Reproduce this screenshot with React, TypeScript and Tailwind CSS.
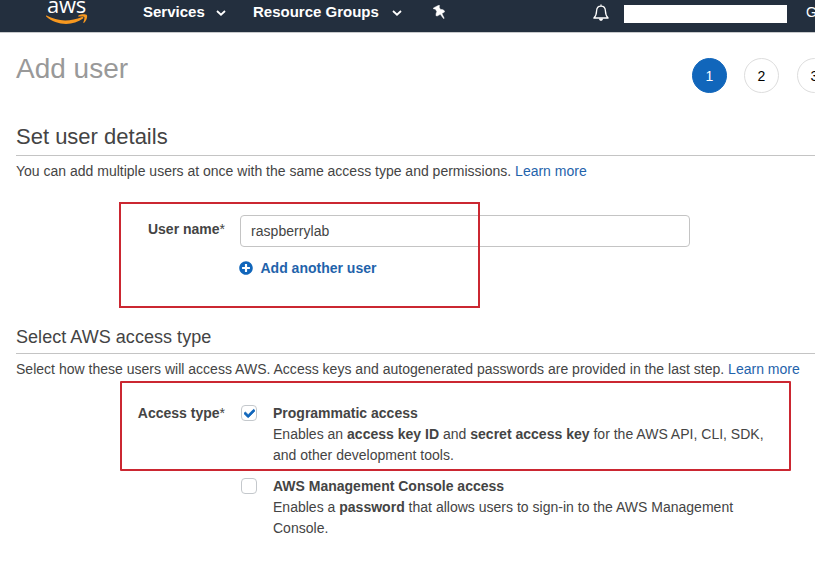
import type { ReactNode } from "react";
import { FaCheck, FaPlusCircle } from "react-icons/fa";

function Chevron({ className }: { className: string }) {
  return (
    <svg viewBox="0 0 10 6" className={`h-[6px] w-[10px] ${className}`} fill="none" stroke="#fff" strokeWidth="1.8">
      <path d="M1 1l4 3.700L9 1" />
    </svg>
  );
}

function Logo() {
  return (
    <div className="relative ml-[46px] h-8 w-[42px]">
      <span className="absolute top-[-12px] left-[1px] font-['Open_Sans',sans-serif] text-[22px] leading-[32px] font-medium tracking-[-0.3px] text-white">
        aws
      </span>
      <svg viewBox="0 0 42 12" className="absolute top-[14px] left-0 h-3 w-[42px]" fill="#f7981f">
        <path d="M.5 1.600C11 7.600 24 7.900 36 3c1.200-.4 2 .7 1 1.500C27 12.300 10 11.700.2 2.500c-.5-.5-.2-1.200.3-.9z" />
        <path d="M32.200 1.700c2.400-1.600 7.400-1.700 8.500-.8 1.200.9-.1 5.700-2.600 7.900-.5.400-1 .1-.7-.5.700-1.700 1.400-4.600.9-5.200-.6-.7-3.600-.6-5.500-.5-.7.100-1-.5-.6-.9z" />
      </svg>
    </div>
  );
}

function Pin() {
  return (
    <svg
      viewBox="0 0 12 14"
      className="mt-[5px] ml-[31px] h-[14px] w-3"
      fill="#fff"
      stroke="#fff"
      strokeWidth=".5"
      strokeLinejoin="round"
    >
      <path d="M.5 2.900L5.700.3c.8-.3 1.300.7.700 1.200l-.4.400 1.500 2.600c2-.1 3.500.5 4.100 1.700.2.400.1.700-.2.900L8.900 8.500l2.300 4.800-.7.200-3.200-4.200-3.200 1.700c-.4.200-.7.100-.9-.3-.4-1.300-.1-2.800.7-4L2.300 3.900l-.9.200C.5 4.200-.1 3.300.5 2.900z" />
    </svg>
  );
}

function Bell() {
  return (
    <svg viewBox="0 0 16 18" className="h-[18px] w-4" fill="none" stroke="#fff" strokeWidth="1.300" strokeLinejoin="round">
      <path d="M8 .4v1.800M8 2.200c-3.100 0-4.300 2.200-4.400 4.600C3.500 10.500 2.800 12.300.9 14h14.200c-1.900-1.700-2.600-3.500-2.700-7.200C12.300 4.400 11.100 2.200 8 2.200z" />
      <path d="M5.900 14.400h4.200c-.2 1.500-1 2.300-2.100 2.300s-1.900-.8-2.100-2.300z" fill="#fff" stroke="none" />
    </svg>
  );
}

function Header() {
  return (
    <header className="flex h-[33px] w-full overflow-hidden border-b border-[#c8cacc] bg-[#232f3e] text-[15px] leading-6 font-bold text-white *:shrink-0">
      <Logo />
      <span className="ml-[55px] w-[61px] whitespace-nowrap">Services</span>
      <Chevron className="mt-[10px] ml-[12px]" />
      <span className="ml-[27px] w-[127px] whitespace-nowrap">Resource Groups</span>
      <Chevron className="mt-[10px] ml-[12px]" />
      <Pin />
      <div className="mt-[4px] ml-[148px]">
        <Bell />
      </div>
      <div className="mt-[5px] ml-[15px] h-[18px] w-[163px] bg-white" />
      <span className="ml-[19px] text-[14px] font-normal">G</span>
    </header>
  );
}

function Step({ n, active = false }: { n: number; active?: boolean }) {
  return (
    <div
      className={`flex h-[35px] w-[35px] shrink-0 items-center justify-center rounded-full border pt-px text-[14px] ${
        active ? "border-[#1166bb] bg-[#1166bb] text-white" : "border-[#ddd] bg-white text-black"
      }`}
    >
      {n}
    </div>
  );
}

function LearnMore() {
  return <a className="text-[#1f63ab]">Learn more</a>;
}

function Option({ checked = false, title, children }: { checked?: boolean; title: string; children: ReactNode }) {
  return (
    <div className="flex">
      <div className="mt-[2px] flex h-4 w-4 shrink-0 items-center justify-center rounded-[4px] border border-[#c4c8cc] bg-white">
        {checked && <FaCheck className="h-[11px] w-[11px] text-[#1166bb]" stroke="currentColor" strokeWidth={36} />}
      </div>
      <div className="ml-4 leading-[21px] tracking-[0.01px] whitespace-nowrap">
        <div className="font-bold tracking-normal">{title}</div>
        {children}
      </div>
    </div>
  );
}

export default function App() {
  return (
    <div className="h-[562px] w-[815px] overflow-hidden bg-white font-['Liberation_Sans',Arial,sans-serif] text-[14px] text-[#444]">
      <Header />
      <main className="pl-4">
        <div className="flex h-[83px]">
          <h1 className="mt-[18px] w-[676px] shrink-0 text-[28px] leading-9 text-[#999]">Add user</h1>
          <div className="mt-[25px] flex">
            <Step n={1} active />
            <div className="mr-[18px] ml-[17px]">
              <Step n={2} />
            </div>
            <Step n={3} />
          </div>
        </div>

        <section className="h-[206px]">
          <h2 className="h-10 border-b border-[#c4c4c4] pt-[7px] text-[22px] leading-[28px]">Set user details</h2>
          <p className="mt-[5px] leading-5">
            You can add multiple users at once with the same access type and permissions. <LearnMore />
          </p>
          <div className="relative mt-[21px] ml-[103px] h-[106px] w-[361px]">
            <div className="flex pt-[13px]">
              <label className="w-[106px] shrink-0 pt-[4px] text-right leading-5 font-bold">
                User name<span className="font-normal">*</span>
              </label>
              <div className="ml-[15px] shrink-0">
                <div className="flex h-8 w-[450px] items-center rounded-[4px] border border-[#c4c4c4] pl-[10px] tracking-[0.04px]">
                  raspberrylab
                </div>
                <a className="mt-[11px] flex items-center leading-5 font-bold text-[#1f63ab]">
                  <FaPlusCircle className="mr-[7.500px] -ml-px h-[14px] w-[14px] text-[#1166bb]" />
                  Add another user
                </a>
              </div>
            </div>
            {/* Highlight frame over the user name field */}
            <div className="absolute inset-0 border-2 border-[#cb2731]" />
          </div>
        </section>

        <section>
          <h3 className="h-8 border-b border-[#c4c4c4] pt-[3px] text-[18px] leading-6 tracking-[0.04px]">
            Select AWS access type
          </h3>
          <p className="mt-[5px] leading-5 tracking-[0.012px] whitespace-nowrap">
            Select how these users will access AWS. Access keys and autogenerated passwords are provided in the last step.{" "}
            <LearnMore />
          </p>
          <div className="relative mt-[2px] ml-[104px] h-[90px] w-[671px]">
            <div className="flex pt-[22px]">
              <label className="w-[105px] shrink-0 text-right leading-5 font-bold">
                Access type<span className="font-normal">*</span>
              </label>
              <div className="ml-4 flex flex-col gap-[10px]">
                <Option checked title="Programmatic access">
                  <div>
                    Enables an <b>access key ID</b> and <b>secret access key</b> for the AWS API, CLI, SDK,
                  </div>
                  <div>and other development tools.</div>
                </Option>
                <Option title="AWS Management Console access">
                  <div>
                    Enables a <b>password</b> that allows users to sign-in to the AWS Management
                  </div>
                  <div>Console.</div>
                </Option>
              </div>
            </div>
            {/* Highlight frame over the programmatic access option */}
            <div className="absolute inset-0 rounded-[1px] border-2 border-[#cb2731]" />
          </div>
        </section>
      </main>
    </div>
  );
}
